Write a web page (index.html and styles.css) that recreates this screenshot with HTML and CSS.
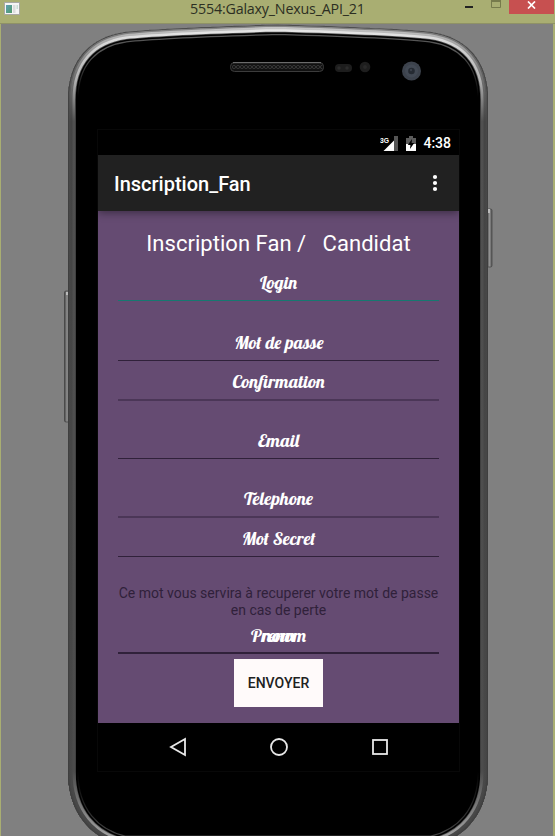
FILE: index.html
```html
<!DOCTYPE html>
<html lang="fr">
<head>
<meta charset="utf-8">
<title>5554:Galaxy_Nexus_API_21</title>
<link rel="stylesheet" href="styles.css">
</head>
<body>
<div class="window">
  <header class="titlebar">
    <svg class="app-icon" width="16" height="13" viewBox="0 0 16 13">
      <defs><linearGradient id="ic" x2="1" y2="1"><stop offset="0" stop-color="#5d9fb5"/><stop offset="1" stop-color="#529b68"/></linearGradient></defs>
      <rect x=".5" y=".5" width="15" height="12" fill="#f5f5f5" stroke="#a9a9a4"/>
      <rect x="2" y="3" width="6" height="8" fill="url(#ic)"/>
      <rect x="9" y="3" width="2.5" height="8" fill="#ddd"/>
      <path d="M12.5 3H14V7H12.5Z" fill="#c8ddd6"/>
    </svg>
    <span class="window-title">5554:Galaxy_Nexus_API_21</span>
    <div class="controls">
      <svg class="minmax" width="44" height="14" viewBox="0 0 44 14"><path d="M0 7H8" stroke="#222" stroke-width="2"/><path d="M26.5 0V7.5H35.5V0" fill="none" stroke="#777b4c"/><path d="M26 1H36" stroke="#777b4c" stroke-width="2"/></svg>
      <div class="close"><svg width="9" height="8" viewBox="0 0 9 8"><path d="M1 .5L8 7.5M8 .5L1 7.5" stroke="#fff" stroke-width="1.7"/></svg></div>
    </div>
  </header>
  <main class="emulator">
    <svg class="device" width="555" height="812" viewBox="0 24 555 812">
      <defs>
        <path id="body" d="M68 100C68 59 91 37 125 32Q160 28 278 24.5Q396 28 431 32C465 37 488 59 488 100V772C488 814 464 839 432 846H124C92 839 68 814 68 772Z"/>
        <clipPath id="bodyClip"><use href="#body"/></clipPath>
        <linearGradient id="rim" gradientUnits="userSpaceOnUse" x1="0" y1="24" x2="0" y2="836"><stop offset="0" stop-color="#ededed"/><stop offset=".025" stop-color="#d5d5d5"/><stop offset=".07" stop-color="#b0b0b0"/><stop offset=".12" stop-color="#505050"/><stop offset=".92" stop-color="#4c4c4c"/><stop offset="1" stop-color="#a0a0a0"/></linearGradient>
        <linearGradient id="mid" gradientUnits="userSpaceOnUse" x1="0" y1="24" x2="0" y2="836"><stop offset="0" stop-color="#ccc"/><stop offset=".02" stop-color="#aaa"/><stop offset=".06" stop-color="#777"/><stop offset=".12" stop-color="#444"/><stop offset="1" stop-color="#484848"/></linearGradient>
        <linearGradient id="edge" gradientUnits="userSpaceOnUse" x1="0" y1="24" x2="0" y2="836"><stop offset="0" stop-color="#888"/><stop offset=".04" stop-color="#666"/><stop offset=".12" stop-color="#484848"/><stop offset="1" stop-color="#444"/></linearGradient>
        <linearGradient id="fine" gradientUnits="userSpaceOnUse" x1="0" y1="24" x2="0" y2="836"><stop offset="0" stop-color="#555"/><stop offset=".035" stop-color="#555"/><stop offset=".09" stop-color="#000"/><stop offset=".92" stop-color="#000"/><stop offset="1" stop-color="#444"/></linearGradient>
        <linearGradient id="key" x2="1" y2="0"><stop offset="0" stop-color="#444"/><stop offset=".5" stop-color="#919191"/><stop offset="1" stop-color="#555"/></linearGradient>
        <pattern id="mesh" width="4" height="8" patternUnits="userSpaceOnUse" patternTransform="translate(232 63)"><circle cx="2" cy="4" r="1.6" fill="none" stroke="#3d3d3d" stroke-width=".8"/></pattern>
      </defs>
      <rect x="64.5" y="291" width="5" height="131" rx="1.5" fill="url(#key)" stroke="#404040" stroke-width=".7"/>
      <path d="M66 292H69V295H66Z" fill="#bbb"/>
      <rect x="487" y="209" width="5" height="58" rx="1.5" fill="url(#key)" stroke="#404040" stroke-width=".7"/>
      <path d="M488 209H490V213H488Z" fill="#bbb"/>
      <use href="#body" fill="#000"/>
      <g clip-path="url(#bodyClip)" fill="none">
        <use href="#body" stroke="url(#fine)" stroke-width="21"/>
        <use href="#body" stroke="#000" stroke-width="18.5"/>
        <use href="#body" stroke="#555" stroke-width="15.5"/>
        <use href="#body" stroke="url(#rim)" stroke-width="14"/>
        <use href="#body" stroke="url(#mid)" stroke-width="9"/>
        <use href="#body" stroke="url(#edge)" stroke-width="4.5"/>
        <use href="#body" stroke="#3e3e3e" stroke-width="1.5"/>
      </g>
      <rect x="230.5" y="62.5" width="93" height="9" rx="4" fill="#111" stroke="#3c3c3c"/>
      <rect x="232" y="63" width="90" height="8" fill="url(#mesh)"/>
      <path d="M233 62.7H321" stroke="#777"/>
      <rect x="335" y="64" width="17" height="8" rx="4" fill="#1d1d1d"/>
      <circle cx="339" cy="68" r="1.7" fill="#2b2b2b"/><circle cx="347" cy="68" r="1.7" fill="#2b2b2b"/>
      <circle cx="365" cy="67" r="5.3" fill="#1e1e1e"/><circle cx="365" cy="67" r="2" fill="#292929"/>
      <circle cx="411.5" cy="71" r="9.5" fill="#3c424c"/><circle cx="411.5" cy="71" r="6.5" fill="#424954"/><circle cx="411.5" cy="71" r="3.3" fill="#252a32"/><circle cx="411" cy="70" r="1.2" fill="#3a404a"/>
    </svg>
    <section class="screen">
      <div class="status">
        <svg width="18" height="15" viewBox="0 0 18 15"><path d="M14 0H18V15H14Z" fill="#555"/><path d="M3.500 15L14 4.500V15Z" fill="#fff"/><text x="0" y="7" class="network" textLength="9" lengthAdjust="spacingAndGlyphs">3G</text></svg>
        <svg class="battery" width="10" height="15" viewBox="0 0 10 15"><path d="M0 2H3V0H7V2H10V8H0Z" fill="#5c5c5c"/><path d="M0 8H10V15H0Z" fill="#fff"/><path d="M6 3L1.8 9H4.4L4 13L8.2 7H5.6Z" fill="#000"/></svg>
        <span>4:38</span>
      </div>
      <div class="appbar">
        <h1>Inscription_Fan</h1>
        <svg width="6" height="18" viewBox="0 0 6 18" fill="#fff"><circle cx="3" cy="3" r="2.1"/><circle cx="3" cy="9" r="2.1"/><circle cx="3" cy="15" r="2.1"/></svg>
      </div>
      <form class="form">
        <h2>Inscription Fan /&nbsp;&nbsp; Candidat</h2>
        <div class="field focused"><svg><text x="142" y="24" textLength="37" lengthAdjust="spacingAndGlyphs">Login</text></svg></div>
        <div class="field spaced"><svg><text x="116.500" y="24" textLength="89" lengthAdjust="spacingAndGlyphs">Mot de passe</text></svg></div>
        <div class="field soft"><svg><text x="114.500" y="24" textLength="92" lengthAdjust="spacingAndGlyphs">Confirmation</text></svg></div>
        <div class="field spaced"><svg><text x="140" y="24" textLength="41" lengthAdjust="spacingAndGlyphs">Email</text></svg></div>
        <div class="field spaced soft phone"><svg><text x="126" y="24" textLength="69" lengthAdjust="spacingAndGlyphs">Telephone</text></svg></div>
        <div class="field"><svg><text x="124" y="24" textLength="73.500" lengthAdjust="spacingAndGlyphs">Mot Secret</text></svg></div>
        <p class="hint">Ce mot vous servira à recuperer votre mot de passe en cas de perte</p>
        <div class="field double"><svg><text x="133" y="23" textLength="55" lengthAdjust="spacingAndGlyphs">Prenom</text><text x="144" y="23" textLength="33" lengthAdjust="spacingAndGlyphs">nom</text></svg></div>
        <button type="button">ENVOYER</button>
      </form>
      <nav class="navbar">
        <svg width="18" height="20" viewBox="0 0 18 20"><path d="M16 2V18L2 10Z"/></svg>
        <svg width="20" height="20" viewBox="0 0 20 20"><circle cx="10" cy="10" r="8"/></svg>
        <svg width="18" height="18" viewBox="0 0 18 18"><rect x="2" y="2" width="14" height="14"/></svg>
      </nav>
    </section>
  </main>
</div>
</body>
</html>
```
FILE: styles.css
```css
* { box-sizing: border-box; }
body { margin: 0; overflow: hidden; font-family: Roboto, sans-serif; }
svg { display: block; flex: none; }

.window { width: 555px; height: 836px; overflow: hidden; display: flex; flex-direction: column; background: #a9ae72; }
.titlebar { height: 24px; display: grid; grid-template-columns: 1fr auto 1fr; align-items: start; border-bottom: 1px solid #8f9266; }
.app-icon { margin: 2px 0 0 4px; }
.window-title { width: 175px; font: 14.3px/18px "Open Sans", sans-serif; letter-spacing: -0.2px; color: #2c2e22; white-space: nowrap; }
.controls { display: flex; justify-content: flex-end; }
.close { width: 45px; height: 14px; margin-right: 1px; background: #c75050; display: flex; justify-content: center; padding-top: 1px; }

.emulator { position: relative; height: 812px; display: flex; padding: 106px 0 0 97px; background: #808080; border: solid #a9ae72; border-width: 0 2px 0 1px; }
.device { position: absolute; top: 0; left: -1px; }
.screen { position: relative; width: 361px; height: 641px; display: flex; flex-direction: column; background: #000; box-shadow: 0 0 0 1px #080808; }

.status { height: 25px; display: flex; align-items: center; justify-content: flex-end; padding: 1px 8px 0 0; color: #fff; font-size: 14px; font-weight: 500; }
.battery { margin: 0 7px 0 8px; }
.network { font: bold 8px "Liberation Sans", sans-serif; fill: #fff; }
.appbar { position: relative; height: 56px; flex: none; display: flex; align-items: center; justify-content: space-between; padding: 0 21px 0 16px; background: #212121; box-shadow: 0 2px 8px rgba(0, 0, 0, .4); }
h1 { margin: 2px 0 0; color: #fff; font-size: 20px; font-weight: 500; }

.form { height: 512px; display: flex; flex-direction: column; align-items: center; padding: 20px 20px 0; background: #654b72; }
h2 { margin: 0; height: 34px; color: #fff; font-size: 22px; font-weight: 400; line-height: 26px; letter-spacing: .03px; white-space: nowrap; }
.field { width: 321px; height: 36px; margin-top: 3px; flex: none; border-bottom: 1px solid #30213a; }
.field svg { width: 321px; height: 35px; }
.field text { fill: #fff; font: 18px Lobster, "Liberation Serif", serif; }
.focused { margin-top: 0; border-color: #167870; }
.spaced { margin-top: 24px; }
.soft { border-bottom: 2px solid #4b3657; margin-bottom: -1px; height: 37px; }
.soft + .field { margin-top: 4px; }
.soft + .spaced { margin-top: 23px; }
.spaced.phone { margin-top: 22px; }
.hint { width: 321px; height: 34px; margin: 28px 0 0; color: #30213a; font-size: 14px; line-height: 16.500px; text-align: center; }
.double { height: 35px; margin-top: 0; border-bottom-width: 2px; }
button { width: 89px; height: 48px; flex: none; margin-top: 5px; padding: 0; border: 0; background: #fffafa; color: #212121; font: 500 14px Roboto, sans-serif; }

.navbar { height: 48px; display: flex; align-items: center; justify-content: center; gap: 82px; }
.navbar svg { fill: none; stroke: #e8e8e8; stroke-width: 1.8; }
```
